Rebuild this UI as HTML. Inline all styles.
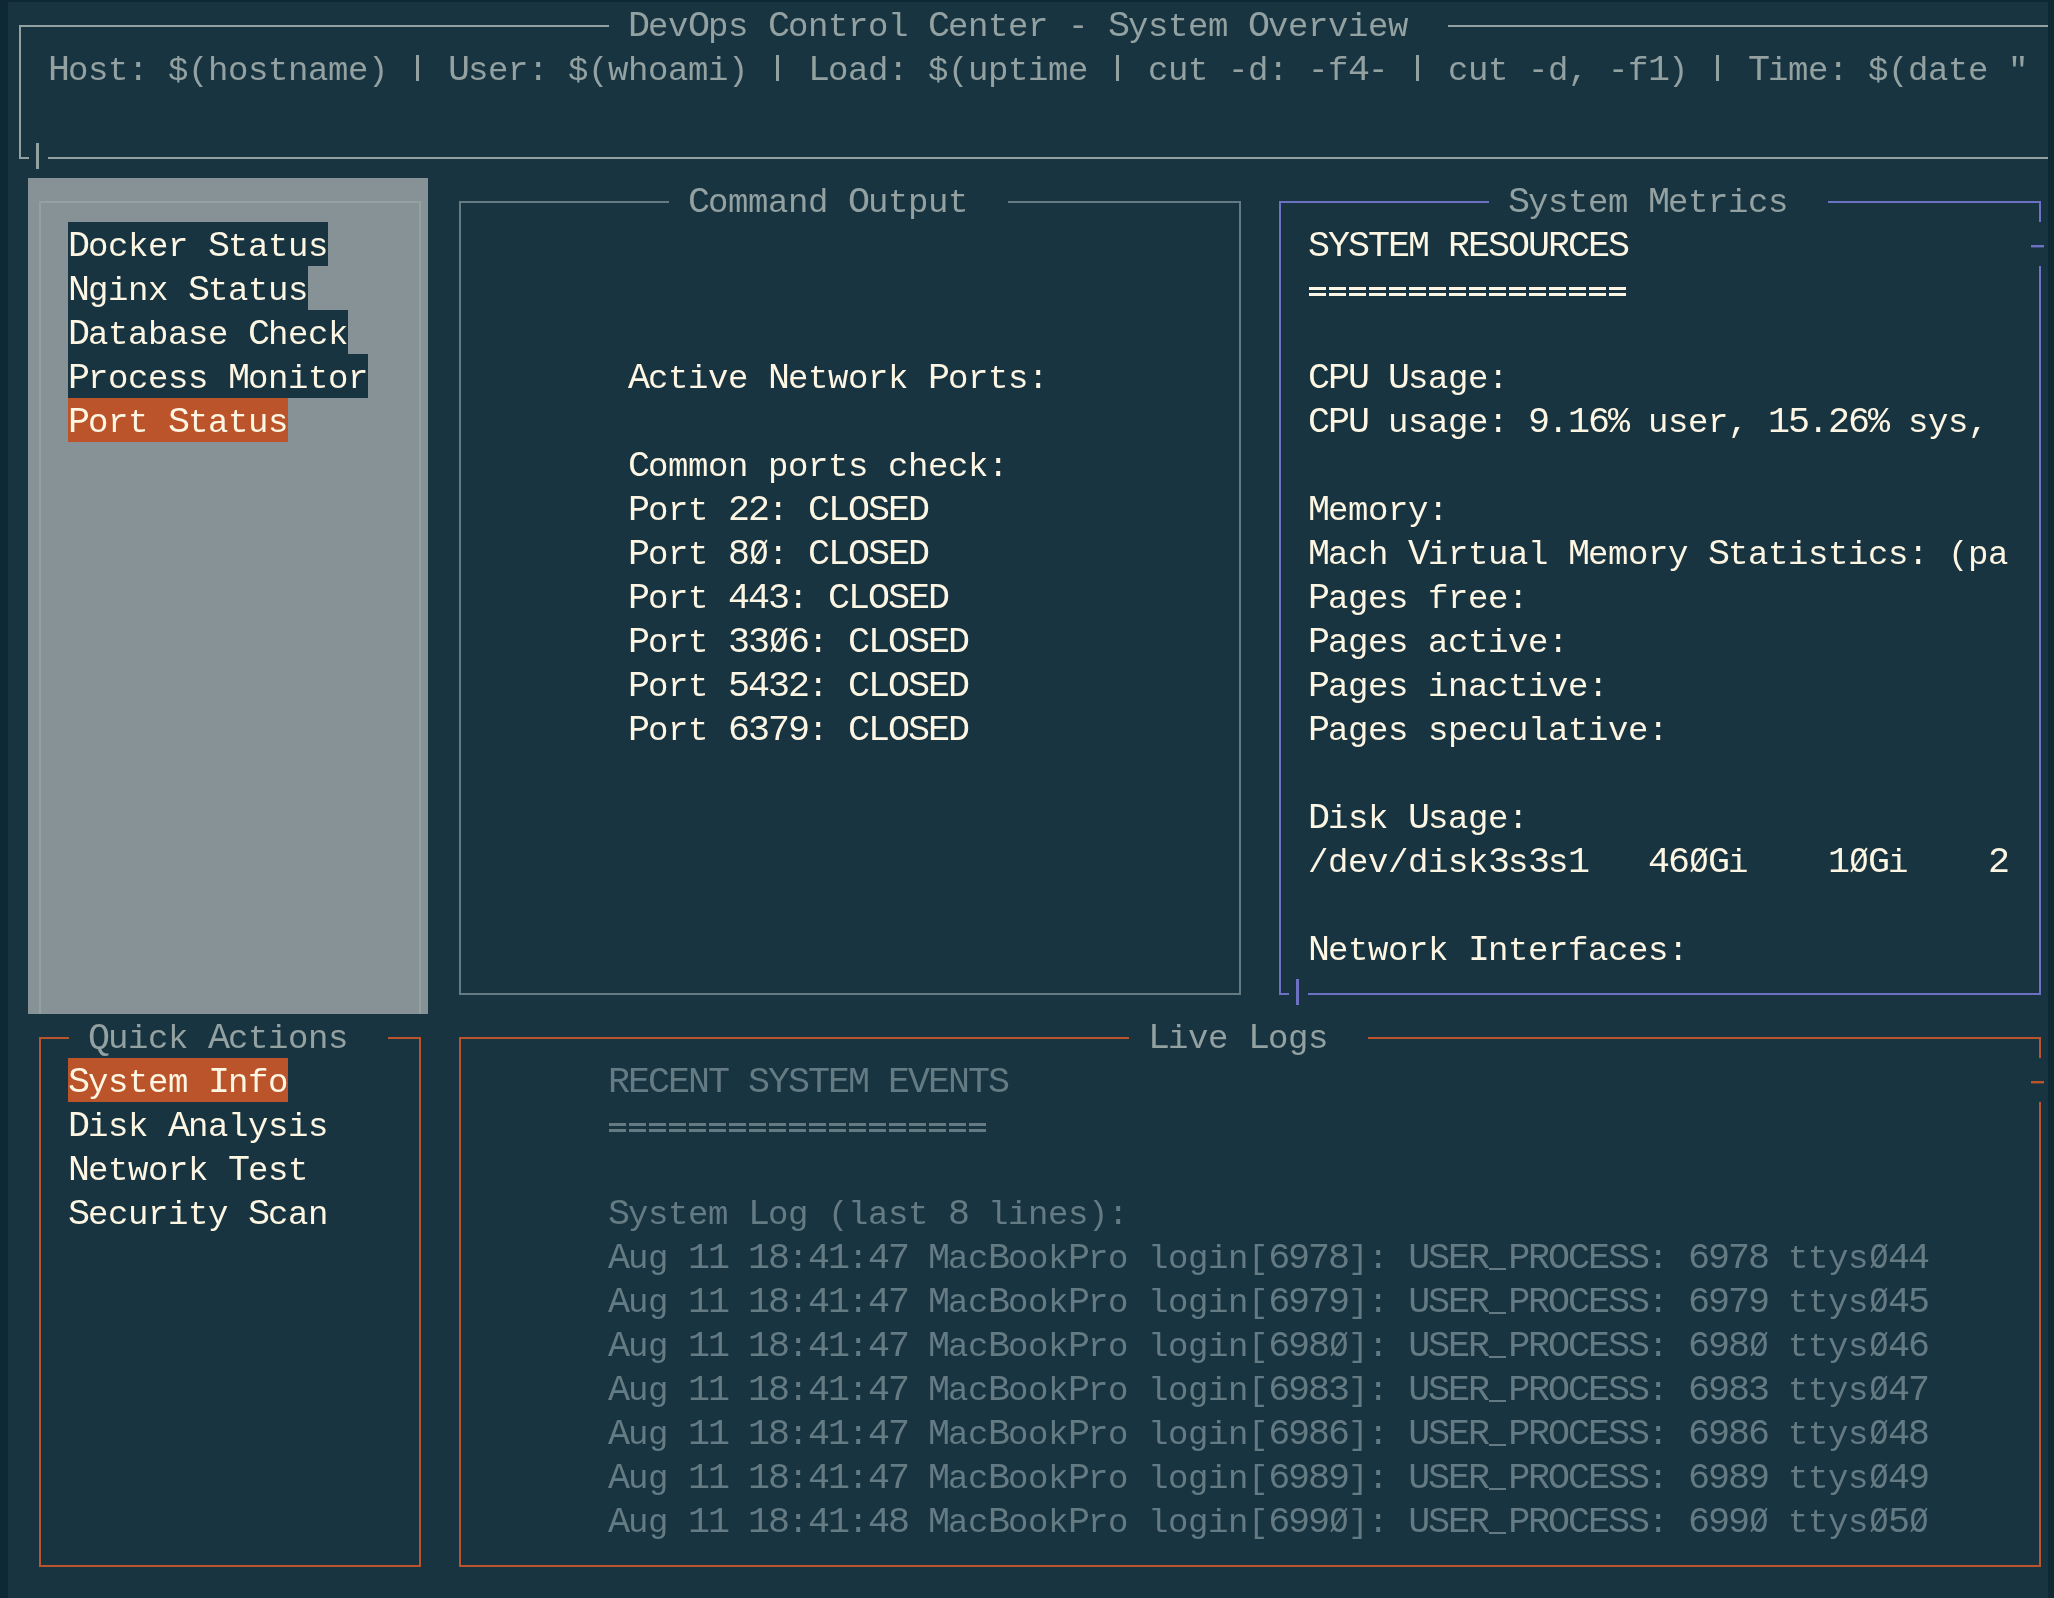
<!DOCTYPE html>
<html><head><meta charset="utf-8"><title>DevOps Control Center</title>
<style>
html,body{margin:0;padding:0;}
body{width:2054px;height:1598px;background:#0e2934;position:relative;overflow:hidden;}
#main{position:absolute;left:8px;top:2px;width:2040px;height:1596px;background:#193441;}
div{position:absolute;}
.u{font-size:36.7px;letter-spacing:-2.0236px;line-height:0;position:relative;left:0.0px;}
.z{display:inline-block;line-height:0;transform:scaleX(0.86);}
.t{font-family:"Liberation Mono",monospace;font-size:34.0px;letter-spacing:-0.4033px;line-height:44px;white-space:pre;will-change:transform;}
</style></head><body>
<div id="main"></div>
<div style="left:19px;top:25px;width:590px;height:2px;background:#93a1a1"></div>
<div style="left:1448px;top:25px;width:600px;height:2px;background:#93a1a1"></div>
<div class="t" style="left:627.5px;top:5.0px;color:#93a1a1"><span class="u">D</span>ev<span class="u">O</span>ps <span class="u">C</span>ontrol <span class="u">C</span>enter - <span class="u">S</span>ystem <span class="u">O</span>verview</div>
<div style="left:19px;top:25px;width:2px;height:134px;background:#93a1a1"></div>
<div style="left:19px;top:157px;width:10px;height:2px;background:#93a1a1"></div>
<div style="left:36px;top:143px;width:3px;height:26px;background:#93a1a1"></div>
<div style="left:48px;top:157px;width:2000px;height:2px;background:#93a1a1"></div>
<div style="left:416px;top:55px;width:3px;height:26px;background:#93a1a1"></div>
<div style="left:776px;top:55px;width:3px;height:26px;background:#93a1a1"></div>
<div style="left:1116px;top:55px;width:3px;height:26px;background:#93a1a1"></div>
<div style="left:1416px;top:55px;width:3px;height:26px;background:#93a1a1"></div>
<div style="left:1716px;top:55px;width:3px;height:26px;background:#93a1a1"></div>
<div class="t" style="left:47.5px;top:49.0px;color:#93a1a1"><span class="u">H</span>ost: $(hostname)   <span class="u">U</span>ser: $(whoami)   <span class="u">L</span>oad: $(uptime   cut -d: -f<span class="u">4</span>-   cut -d, -f<span class="u">1</span>)   <span class="u">T</span>ime: $(date &quot;</div>
<div style="left:28px;top:178px;width:400px;height:836px;background:#869296"></div>
<div style="left:39px;top:201px;width:382px;height:2px;background:#93a1a1"></div>
<div style="left:39px;top:201px;width:2px;height:813px;background:#93a1a1"></div>
<div style="left:419px;top:201px;width:2px;height:813px;background:#93a1a1"></div>
<div style="left:68px;top:222px;width:260px;height:44px;background:#193441"></div>
<div class="t" style="left:67.5px;top:225.0px;color:#fdf6e3"><span class="u">D</span>ocker <span class="u">S</span>tatus</div>
<div style="left:68px;top:266px;width:240px;height:44px;background:#193441"></div>
<div class="t" style="left:67.5px;top:269.0px;color:#fdf6e3"><span class="u">N</span>ginx <span class="u">S</span>tatus</div>
<div style="left:68px;top:310px;width:280px;height:44px;background:#193441"></div>
<div class="t" style="left:67.5px;top:313.0px;color:#fdf6e3"><span class="u">D</span>atabase <span class="u">C</span>heck</div>
<div style="left:68px;top:354px;width:300px;height:44px;background:#193441"></div>
<div class="t" style="left:67.5px;top:357.0px;color:#fdf6e3"><span class="u">P</span>rocess <span class="u">M</span>onitor</div>
<div style="left:68px;top:398px;width:220px;height:44px;background:#bb542a"></div>
<div class="t" style="left:67.5px;top:401.0px;color:#fdf6e3"><span class="u">P</span>ort <span class="u">S</span>tatus</div>
<div style="left:459px;top:201px;width:210px;height:2px;background:#657b83"></div>
<div style="left:1008px;top:201px;width:233px;height:2px;background:#657b83"></div>
<div style="left:459px;top:201px;width:2px;height:794px;background:#657b83"></div>
<div style="left:1239px;top:201px;width:2px;height:794px;background:#657b83"></div>
<div style="left:459px;top:993px;width:782px;height:2px;background:#657b83"></div>
<div class="t" style="left:687.5px;top:181.0px;color:#93a1a1"><span class="u">C</span>ommand <span class="u">O</span>utput</div>
<div class="t" style="left:627.5px;top:357.0px;color:#fdf6e3"><span class="u">A</span>ctive <span class="u">N</span>etwork <span class="u">P</span>orts:</div>
<div class="t" style="left:627.5px;top:445.0px;color:#fdf6e3"><span class="u">C</span>ommon ports check:</div>
<div class="t" style="left:627.5px;top:489.0px;color:#fdf6e3"><span class="u">P</span>ort <span class="u">22</span>: <span class="u">CLOSED</span></div>
<div class="t" style="left:627.5px;top:533.0px;color:#fdf6e3"><span class="u">P</span>ort <span class="u">8<span class="z">Ø</span></span>: <span class="u">CLOSED</span></div>
<div class="t" style="left:627.5px;top:577.0px;color:#fdf6e3"><span class="u">P</span>ort <span class="u">443</span>: <span class="u">CLOSED</span></div>
<div class="t" style="left:627.5px;top:621.0px;color:#fdf6e3"><span class="u">P</span>ort <span class="u">33<span class="z">Ø</span>6</span>: <span class="u">CLOSED</span></div>
<div class="t" style="left:627.5px;top:665.0px;color:#fdf6e3"><span class="u">P</span>ort <span class="u">5432</span>: <span class="u">CLOSED</span></div>
<div class="t" style="left:627.5px;top:709.0px;color:#fdf6e3"><span class="u">P</span>ort <span class="u">6379</span>: <span class="u">CLOSED</span></div>
<div style="left:1279px;top:201px;width:210px;height:2px;background:#6c71c4"></div>
<div style="left:1828px;top:201px;width:213px;height:2px;background:#6c71c4"></div>
<div style="left:1279px;top:201px;width:2px;height:794px;background:#6c71c4"></div>
<div style="left:2039px;top:201px;width:2px;height:21px;background:#6c71c4"></div>
<div style="left:2031px;top:245px;width:13px;height:2px;background:#6c71c4;box-shadow:0 1px 0 0 #6c71c466"></div>
<div style="left:2039px;top:266px;width:2px;height:729px;background:#6c71c4"></div>
<div style="left:1279px;top:993px;width:10px;height:2px;background:#6c71c4"></div>
<div style="left:1296px;top:979px;width:3px;height:26px;background:#6c71c4"></div>
<div style="left:1308px;top:993px;width:733px;height:2px;background:#6c71c4"></div>
<div class="t" style="left:1507.5px;top:181.0px;color:#93a1a1"><span class="u">S</span>ystem <span class="u">M</span>etrics</div>
<div class="t" style="left:1307.5px;top:225.0px;color:#fdf6e3"><span class="u">SYSTEM</span> <span class="u">RESOURCES</span></div>
<div style="left:1309px;top:287px;width:317px;height:3px;background:repeating-linear-gradient(90deg,#fdf6e3 0 17px,transparent 17px 20px)"></div>
<div style="left:1309px;top:293px;width:317px;height:3px;background:repeating-linear-gradient(90deg,#fdf6e3 0 17px,transparent 17px 20px)"></div>
<div class="t" style="left:1307.5px;top:357.0px;color:#fdf6e3"><span class="u">CPU</span> <span class="u">U</span>sage:</div>
<div class="t" style="left:1307.5px;top:401.0px;color:#fdf6e3"><span class="u">CPU</span> usage: <span class="u">9</span>.<span class="u">16%</span> user, <span class="u">15</span>.<span class="u">26%</span> sys,</div>
<div class="t" style="left:1307.5px;top:489.0px;color:#fdf6e3"><span class="u">M</span>emory:</div>
<div class="t" style="left:1307.5px;top:533.0px;color:#fdf6e3"><span class="u">M</span>ach <span class="u">V</span>irtual <span class="u">M</span>emory <span class="u">S</span>tatistics: (pa</div>
<div class="t" style="left:1307.5px;top:577.0px;color:#fdf6e3"><span class="u">P</span>ages free:</div>
<div class="t" style="left:1307.5px;top:621.0px;color:#fdf6e3"><span class="u">P</span>ages active:</div>
<div class="t" style="left:1307.5px;top:665.0px;color:#fdf6e3"><span class="u">P</span>ages inactive:</div>
<div class="t" style="left:1307.5px;top:709.0px;color:#fdf6e3"><span class="u">P</span>ages speculative:</div>
<div class="t" style="left:1307.5px;top:797.0px;color:#fdf6e3"><span class="u">D</span>isk <span class="u">U</span>sage:</div>
<div class="t" style="left:1307.5px;top:841.0px;color:#fdf6e3">/dev/disk<span class="u">3</span>s<span class="u">3</span>s<span class="u">1</span>   <span class="u">46<span class="z">Ø</span>G</span>i    <span class="u">1<span class="z">Ø</span>G</span>i    <span class="u">2</span></div>
<div class="t" style="left:1307.5px;top:929.0px;color:#fdf6e3"><span class="u">N</span>etwork <span class="u">I</span>nterfaces:</div>
<div style="left:39px;top:1037px;width:30px;height:2px;background:#bb542a"></div>
<div style="left:388px;top:1037px;width:33px;height:2px;background:#bb542a"></div>
<div style="left:39px;top:1037px;width:2px;height:530px;background:#bb542a"></div>
<div style="left:419px;top:1037px;width:2px;height:530px;background:#bb542a"></div>
<div style="left:39px;top:1565px;width:382px;height:2px;background:#bb542a"></div>
<div class="t" style="left:87.5px;top:1017.0px;color:#93a1a1"><span class="u">Q</span>uick <span class="u">A</span>ctions</div>
<div style="left:68px;top:1058px;width:220px;height:44px;background:#bb542a"></div>
<div class="t" style="left:67.5px;top:1061.0px;color:#fdf6e3"><span class="u">S</span>ystem <span class="u">I</span>nfo</div>
<div class="t" style="left:67.5px;top:1105.0px;color:#fdf6e3"><span class="u">D</span>isk <span class="u">A</span>nalysis</div>
<div class="t" style="left:67.5px;top:1149.0px;color:#fdf6e3"><span class="u">N</span>etwork <span class="u">T</span>est</div>
<div class="t" style="left:67.5px;top:1193.0px;color:#fdf6e3"><span class="u">S</span>ecurity <span class="u">S</span>can</div>
<div style="left:459px;top:1037px;width:670px;height:2px;background:#bb542a"></div>
<div style="left:1368px;top:1037px;width:673px;height:2px;background:#bb542a"></div>
<div style="left:459px;top:1037px;width:2px;height:530px;background:#bb542a"></div>
<div style="left:2039px;top:1037px;width:2px;height:21px;background:#bb542a"></div>
<div style="left:2031px;top:1081px;width:13px;height:2px;background:#bb542a;box-shadow:0 1px 0 0 #bb542a66"></div>
<div style="left:2039px;top:1102px;width:2px;height:465px;background:#bb542a"></div>
<div style="left:459px;top:1565px;width:1582px;height:2px;background:#bb542a"></div>
<div class="t" style="left:1147.5px;top:1017.0px;color:#93a1a1"><span class="u">L</span>ive <span class="u">L</span>ogs</div>
<div class="t" style="left:607.5px;top:1061.0px;color:#657b83"><span class="u">RECENT</span> <span class="u">SYSTEM</span> <span class="u">EVENTS</span></div>
<div style="left:609px;top:1123px;width:377px;height:3px;background:repeating-linear-gradient(90deg,#657b83 0 17px,transparent 17px 20px)"></div>
<div style="left:609px;top:1129px;width:377px;height:3px;background:repeating-linear-gradient(90deg,#657b83 0 17px,transparent 17px 20px)"></div>
<div class="t" style="left:607.5px;top:1193.0px;color:#657b83"><span class="u">S</span>ystem <span class="u">L</span>og (last <span class="u">8</span> lines):</div>
<div style="left:1489px;top:1268px;width:17px;height:2px;background:#657b83"></div>
<div class="t" style="left:607.5px;top:1237.0px;color:#657b83"><span class="u">A</span>ug <span class="u">11</span> <span class="u">18</span>:<span class="u">41</span>:<span class="u">47</span> <span class="u">M</span>ac<span class="u">B</span>ook<span class="u">P</span>ro login[<span class="u">6978</span>]: <span class="u">USER</span> <span class="u">PROCESS</span>: <span class="u">6978</span> ttys<span class="u"><span class="z">Ø</span>44</span></div>
<div style="left:1489px;top:1312px;width:17px;height:2px;background:#657b83"></div>
<div class="t" style="left:607.5px;top:1281.0px;color:#657b83"><span class="u">A</span>ug <span class="u">11</span> <span class="u">18</span>:<span class="u">41</span>:<span class="u">47</span> <span class="u">M</span>ac<span class="u">B</span>ook<span class="u">P</span>ro login[<span class="u">6979</span>]: <span class="u">USER</span> <span class="u">PROCESS</span>: <span class="u">6979</span> ttys<span class="u"><span class="z">Ø</span>45</span></div>
<div style="left:1489px;top:1356px;width:17px;height:2px;background:#657b83"></div>
<div class="t" style="left:607.5px;top:1325.0px;color:#657b83"><span class="u">A</span>ug <span class="u">11</span> <span class="u">18</span>:<span class="u">41</span>:<span class="u">47</span> <span class="u">M</span>ac<span class="u">B</span>ook<span class="u">P</span>ro login[<span class="u">698<span class="z">Ø</span></span>]: <span class="u">USER</span> <span class="u">PROCESS</span>: <span class="u">698<span class="z">Ø</span></span> ttys<span class="u"><span class="z">Ø</span>46</span></div>
<div style="left:1489px;top:1400px;width:17px;height:2px;background:#657b83"></div>
<div class="t" style="left:607.5px;top:1369.0px;color:#657b83"><span class="u">A</span>ug <span class="u">11</span> <span class="u">18</span>:<span class="u">41</span>:<span class="u">47</span> <span class="u">M</span>ac<span class="u">B</span>ook<span class="u">P</span>ro login[<span class="u">6983</span>]: <span class="u">USER</span> <span class="u">PROCESS</span>: <span class="u">6983</span> ttys<span class="u"><span class="z">Ø</span>47</span></div>
<div style="left:1489px;top:1444px;width:17px;height:2px;background:#657b83"></div>
<div class="t" style="left:607.5px;top:1413.0px;color:#657b83"><span class="u">A</span>ug <span class="u">11</span> <span class="u">18</span>:<span class="u">41</span>:<span class="u">47</span> <span class="u">M</span>ac<span class="u">B</span>ook<span class="u">P</span>ro login[<span class="u">6986</span>]: <span class="u">USER</span> <span class="u">PROCESS</span>: <span class="u">6986</span> ttys<span class="u"><span class="z">Ø</span>48</span></div>
<div style="left:1489px;top:1488px;width:17px;height:2px;background:#657b83"></div>
<div class="t" style="left:607.5px;top:1457.0px;color:#657b83"><span class="u">A</span>ug <span class="u">11</span> <span class="u">18</span>:<span class="u">41</span>:<span class="u">47</span> <span class="u">M</span>ac<span class="u">B</span>ook<span class="u">P</span>ro login[<span class="u">6989</span>]: <span class="u">USER</span> <span class="u">PROCESS</span>: <span class="u">6989</span> ttys<span class="u"><span class="z">Ø</span>49</span></div>
<div style="left:1489px;top:1532px;width:17px;height:2px;background:#657b83"></div>
<div class="t" style="left:607.5px;top:1501.0px;color:#657b83"><span class="u">A</span>ug <span class="u">11</span> <span class="u">18</span>:<span class="u">41</span>:<span class="u">48</span> <span class="u">M</span>ac<span class="u">B</span>ook<span class="u">P</span>ro login[<span class="u">699<span class="z">Ø</span></span>]: <span class="u">USER</span> <span class="u">PROCESS</span>: <span class="u">699<span class="z">Ø</span></span> ttys<span class="u"><span class="z">Ø</span>5<span class="z">Ø</span></span></div>
</body></html>
